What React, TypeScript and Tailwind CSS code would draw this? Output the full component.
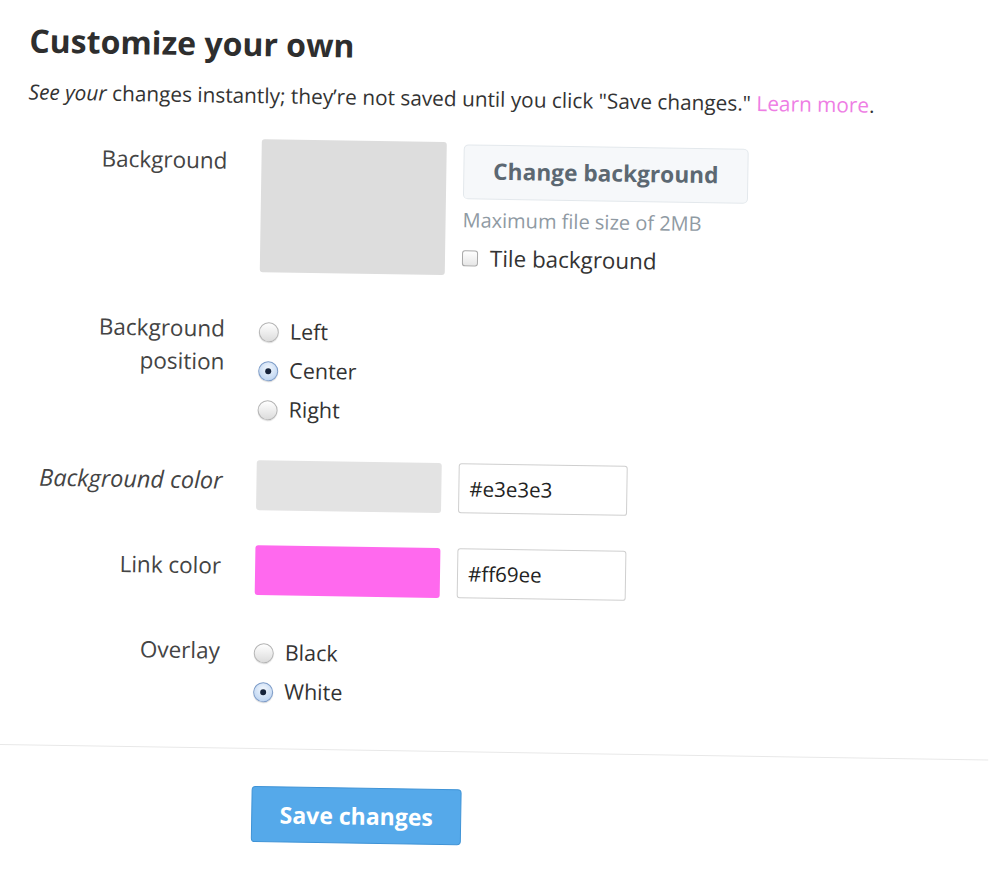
import React from "react";

const sans = "font-['Open_Sans','Lato',sans-serif]";

function Radio({ checked }: { checked?: boolean }) {
  if (checked) {
    return (
      <span className="flex h-5 w-5 shrink-0 items-center justify-center rounded-full border border-[#7d9cc8] bg-[radial-gradient(circle_at_50%_35%,#f2f7fd,#b2cdef)] shadow-[0_1px_1px_rgba(0,0,0,0.15)]">
        <span className="h-[6px] w-[6px] rounded-full bg-[#16233a]" />
      </span>
    );
  }
  return (
    <span className="h-5 w-5 shrink-0 rounded-full border border-[#b4b4b4] bg-linear-to-b from-white to-[#dcdcdc] shadow-[0_1px_1px_rgba(0,0,0,0.12)]" />
  );
}

function RadioGroup({ options, selected }: { options: string[]; selected: string }) {
  return (
    <div className="flex flex-col">
      {options.map((o) => (
        <label key={o} className="flex h-[39px] items-center gap-[11px] text-[21.5px] text-[#333]">
          <Radio checked={o === selected} />
          <span>{o}</span>
        </label>
      ))}
    </div>
  );
}

function Row({ label, italic, className, labelPad, children }: { label: React.ReactNode; italic?: boolean; className?: string; labelPad?: string; children: React.ReactNode }) {
  return (
    <div className={"grid grid-cols-[200px_1fr] gap-x-[34px] " + (className ?? "")}>
      <div className={"text-right leading-[33px] text-[#444] " + (italic ? "text-[23.5px] italic " : "text-[22.5px] ") + (labelPad ?? "")}>{label}</div>
      <div>{children}</div>
    </div>
  );
}

export default function App() {
  return (
    <div className={"h-[885px] w-full overflow-hidden bg-white " + sans}>
      <div className="origin-top-left rotate-[0.9deg]">
        <div className="pl-[30px] pt-[20px]">
          <h1 className="text-[32px] font-bold leading-[40px] text-[#2e2e2e]">Customize your own</h1>
          <p className="mt-[17px] text-[20.8px] leading-[28px] text-[#333]">
            <span className="italic">See your</span> changes instantly; they’re not saved until you click "Save changes."{" "}
            <a className="text-[#ee7ee4]">Learn more</a>.
          </p>

          <Row label="Background" className="mt-[30px]" labelPad="pt-[5px]">
            <div className="flex gap-[17px]">
              <div className="h-[133px] w-[185px] rounded-[3px] bg-[#dddddd]" />
              <div className="flex flex-col pt-[2px]">
                <button className="h-[55px] w-[285px] rounded-[5px] border border-[#e3e8ec] bg-[#f6f8fa] text-[22.7px] font-bold text-[#5c6872]">
                  Change background
                </button>
                <div className="mt-[8px] text-[20px] leading-[26px] text-[#8f9aa3]">Maximum file size of 2MB</div>
                <label className="mt-[10px] flex h-[30px] items-center gap-[12px] text-[22.4px] text-[#333]">
                  <span className="h-4 w-4 rounded-[3px] border border-[#a8a8a8] bg-linear-to-b from-white to-[#e6e6e6]" />
                  Tile background
                </label>
              </div>
            </div>
          </Row>

          <Row
            label={
              <>
                Background
                <br />
                position
              </>
            }
            className="mt-[40px]"
          >
            <RadioGroup options={["Left", "Center", "Right"]} selected="Center" />
          </Row>

          <Row label="Background color" italic className="mt-[31px]" labelPad="pt-[4px]">
            <div className="flex items-start gap-[17px]">
              <div className="h-[50px] w-[185px] rounded-[3px] bg-[#e3e3e3]" />
              <input
                readOnly
                value="#e3e3e3"
                className="h-[50px] w-[169px] rounded-[3px] border border-[#cfcfcf] bg-white px-[10px] text-[20.5px] text-[#222] outline-none"
              />
            </div>
          </Row>

          <Row label="Link color" className="mt-[35px]" labelPad="pt-[4px]">
            <div className="flex items-start gap-[17px]">
              <div className="h-[50px] w-[185px] rounded-[3px] bg-[#ff69ee]" />
              <input
                readOnly
                value="#ff69ee"
                className="h-[50px] w-[169px] rounded-[3px] border border-[#cfcfcf] bg-white px-[10px] text-[20.5px] text-[#222] outline-none"
              />
            </div>
          </Row>

          <Row label="Overlay" className="mt-[38px]" labelPad="pt-[1px]">
            <RadioGroup options={["Black", "White"]} selected="White" />
          </Row>
        </div>

        <div className="mt-[37px] w-[1000px] border-t border-[#e8e8e8]" />

        <div className="pl-[264px] pt-[37px]">
          <button className="h-[56px] w-[210px] rounded-[4px] border border-[#3f93d6] bg-[#55a9ea] text-[23px] font-bold text-white">
            Save changes
          </button>
        </div>
      </div>
    </div>
  );
}
